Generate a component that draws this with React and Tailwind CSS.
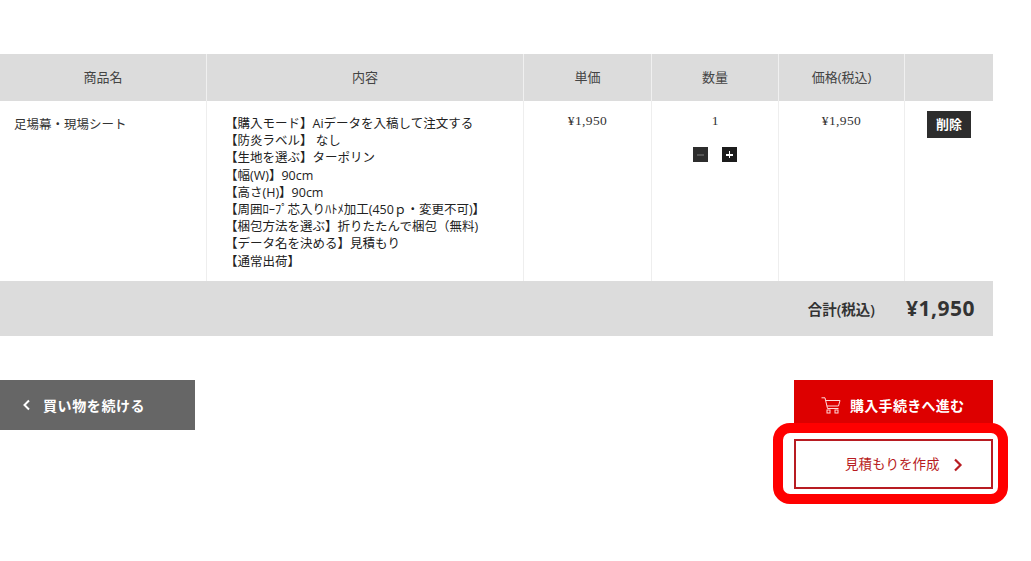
import React from "react";

const font = { };
const lines = [
  "【購入モード】Aiデータを入稿して注文する",
  "【防炎ラベル】 なし",
  "【生地を選ぶ】ターポリン",
  "【幅(W)】90cm",
  "【高さ(H)】90cm",
  "【周囲ﾛｰﾌﾟ芯入りﾊﾄﾒ加工(450ｐ・変更不可)】",
  "【梱包方法を選ぶ】折りたたんで梱包（無料)",
  "【データ名を決める】見積もり",
  "【通常出荷】",
];

function Head({ w, children, last }) {
  return (
    <div className={`${w} ${last ? "" : "border-r border-[#f0f0f0]"} flex items-center justify-center text-[13px] text-[#444]`}>
      {children}
    </div>
  );
}

export default function App() {
  return (
    <div className="relative w-[1031px] h-[561px] overflow-hidden bg-white pt-[54px] font-['Open_Sans','Noto_Sans_CJK_JP',sans-serif] text-[#333]">
      <div className="w-[993px]">
        <div className="flex h-[47px] bg-[#dcdcdc]">
          <Head w="w-[207px]">商品名</Head>
          <Head w="w-[317px]">内容</Head>
          <Head w="w-[128px]">単価</Head>
          <Head w="w-[127px]">数量</Head>
          <Head w="w-[126px]">価格(税込)</Head>
          <Head w="flex-1" last />
        </div>
        <div className="flex h-[180px] text-[13px] text-[#333]">
          <div className="w-[207px] border-r border-[#eeeeee] pl-[14px] pt-[14px] leading-[19px] text-[12.5px]">足場幕・現場シート</div>
          <div className="w-[317px] border-r border-[#eeeeee] pl-[18px] pt-[14px] text-[12.5px] leading-[17.2px] text-[#222]">
            {lines.map((l) => (
              <div key={l} className="whitespace-nowrap">{l}</div>
            ))}
          </div>
          <div className="w-[128px] border-r border-[#eeeeee] pt-[10px] text-center font-['Liberation_Serif','Noto_Sans_CJK_JP',serif] text-[13.5px] tracking-[0.4px]">¥1,950</div>
          <div className="w-[127px] border-r border-[#eeeeee] pt-[10px] flex flex-col items-center font-['Liberation_Serif',serif] text-[13.5px]">
            <span>1</span>
            <div className="mt-[16px] flex gap-[14px]">
              <span className="flex h-[15px] w-[15px] items-center justify-center bg-[#2d2d2d]">
                <span className="h-[1.5px] w-[7px] bg-[#555]" />
              </span>
              <span className="relative flex h-[15px] w-[15px] items-center justify-center bg-[#1c1c1c]">
                <span className="h-[1.5px] w-[7px] bg-white" />
                <span className="absolute h-[7px] w-[1.5px] bg-white" />
              </span>
            </div>
          </div>
          <div className="w-[126px] border-r border-[#eeeeee] pt-[10px] text-center font-['Liberation_Serif','Noto_Sans_CJK_JP',serif] text-[13.5px] tracking-[0.4px]">¥1,950</div>
          <div className="flex-1 pt-[10px] pl-[22px]">
            <div className="flex h-[27px] w-[44px] items-center justify-center bg-[#2d2d2d] text-[13px] font-bold text-white">削除</div>
          </div>
        </div>
        <div className="flex h-[55px] items-center justify-end bg-[#dcdcdc] pr-[18px] font-semibold text-[#333]">
          <span className="mt-[3px] text-[14.5px]">合計(税込)</span>
          <span className="ml-[31px] text-[21px] font-bold tracking-[0.5px]">¥1,950</span>
        </div>
        <div className="mt-[44px] flex items-start justify-between">
          <div className="flex h-[50px] w-[195px] items-center bg-[#666666] pl-[22px] text-[14px] font-semibold tracking-[0.6px] text-white">
            <svg width="9" height="12" viewBox="0 0 9 12" fill="none" stroke="white" strokeWidth="2">
              <path d="M7 1.5 L2.5 6 L7 10.5" />
            </svg>
            <span className="ml-[12px]">買い物を続ける</span>
          </div>
          <div className="flex w-[199px] flex-col gap-[9px]">
            <div className="flex h-[50px] items-center bg-[#dd0000] pl-[27px] text-[14px] font-bold tracking-[0.3px] text-white">
              <svg width="20" height="17" viewBox="0 0 20 17" fill="none" stroke="#ffd9d9" strokeWidth="1">
                <path d="M0.5 0.8 H4 L6.5 11.5 H17.5 M4.6 3.5 H19 L17.5 9 H5.8" />
                <rect x="6" y="13" width="3" height="3" />
                <rect x="14" y="13" width="3" height="3" />
              </svg>
              <span className="ml-[9px]">購入手続きへ進む</span>
            </div>
            <div className="flex h-[50px] items-center border-2 border-[#b81c22] bg-white pl-[49px] text-[13.5px] text-[#b81c22]">
              <span>見積もりを作成</span>
              <svg className="ml-[13px] mt-[2px]" width="10" height="14" viewBox="0 0 10 14" fill="none" stroke="#b81c22" strokeWidth="2.2">
                <path d="M2 1.5 L7.5 7 L2 12.5" />
              </svg>
            </div>
          </div>
        </div>
      </div>
      <div className="absolute left-[773px] top-[423px] h-[81px] w-[235px] rounded-[17px] border-[10px] border-[#ff0000]" />
    </div>
  );
}
